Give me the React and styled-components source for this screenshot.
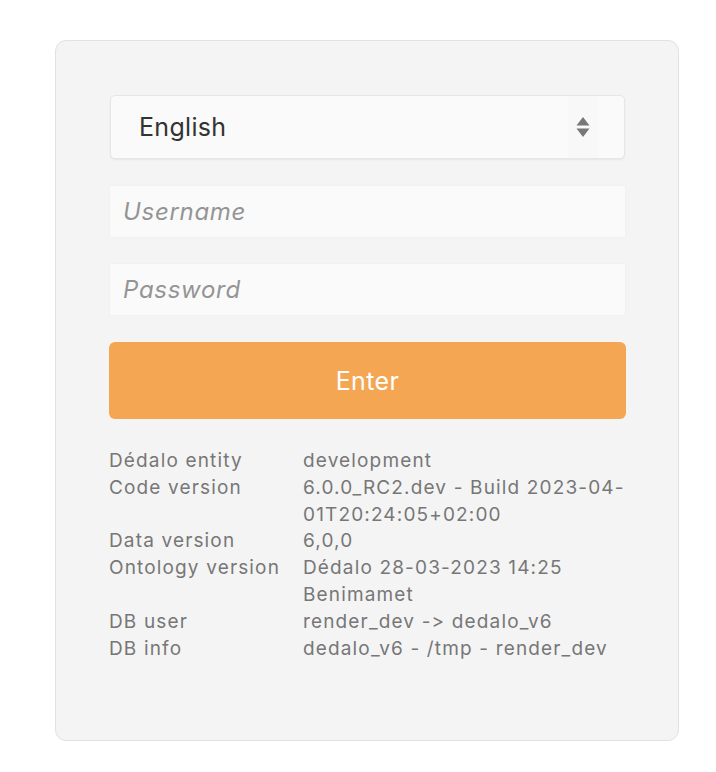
import React from 'react';
import styled, { createGlobalStyle } from 'styled-components';

const GlobalStyle = createGlobalStyle`
  body {
    margin: 0;
    background: #ffffff;
    font-family: Inter, "Noto Sans", "Liberation Sans", sans-serif;
    font-feature-settings: "calt" 0, "liga" 0;
  }
`;

const Page = styled.div`
  padding: 40px 0 0 55px;
`;

const Card = styled.div`
  box-sizing: border-box;
  width: 624px;
  height: 701px;
  background: #f4f4f4;
  border: 1.5px solid #e1e1e1;
  border-radius: 11px;
  padding: 54px 52px 0 53px;
  display: flex;
  flex-direction: column;
`;

const SelectBox = styled.div`
  box-sizing: border-box;
  height: 64px;
  margin: 0 1px;
  display: flex;
  align-items: center;
  justify-content: space-between;
  padding: 0 26px 0 28px;
  background: #fafafa;
  border: 1px solid #e6e6e6;
  border-radius: 5px;
  box-shadow: 0 1px 2px rgba(0, 0, 0, 0.06);
  font-size: 25px;
  letter-spacing: 0.3px;
  color: #333333;
`;

const Arrows = styled.span`
  display: flex;
  align-items: center;
  justify-content: center;
  width: 30px;
  height: 62px;
  background: #f8f8f8;
`;

const Input = styled.input`
  box-sizing: border-box;
  width: 100%;
  height: 53px;
  margin-top: ${p => p.$gap}px;
  padding: 0 13px;
  background: #fafafa;
  border: 1px solid #f1f1f1;
  border-radius: 0;
  outline: none;
  font-family: inherit;
  font-size: 24px;
  letter-spacing: 0.7px;
  color: #333;
  &::placeholder {
    color: #949494;
    font-style: italic;
  }
`;

const Button = styled.button`
  height: 77px;
  margin-top: 26px;
  background: #f5a652;
  border: none;
  border-radius: 6px;
  color: #ffffff;
  font-family: inherit;
  font-size: 25px;
  letter-spacing: 0.4px;
  cursor: pointer;
`;

const InfoGrid = styled.div`
  margin-top: 29px;
  display: grid;
  grid-template-columns: 194px 1fr;
  font-size: 19px;
  letter-spacing: 1.15px;
  line-height: 26.8px;
  color: #777777;
`;

const Label = styled.div`
  white-space: nowrap;
`;

const Line = styled.div`
  white-space: nowrap;
`;

const info = [
  ['Dédalo entity', ['development']],
  ['Code version', ['6.0.0_RC2.dev - Build 2023-04-', '01T20:24:05+02:00']],
  ['Data version', ['6,0,0']],
  ['Ontology version', ['Dédalo 28-03-2023 14:25', 'Benimamet']],
  ['DB user', ['render_dev -> dedalo_v6']],
  ['DB info', ['dedalo_v6 - /tmp - render_dev']],
];

const SortArrows = () => (
  <svg width="14" height="22" viewBox="0 0 14 22">
    <path d="M7 1 L13.5 9.5 H0.5 Z" fill="#777" />
    <path d="M7 21 L13.5 12.5 H0.5 Z" fill="#777" />
  </svg>
);

export default function App() {
  return (
    <Page>
      <GlobalStyle />
      <Card>
        <SelectBox>
          <span>English</span>
          <Arrows><SortArrows /></Arrows>
        </SelectBox>
        <Input $gap={26} placeholder="Username" />
        <Input $gap={25} type="password" placeholder="Password" />
        <Button>Enter</Button>
        <InfoGrid>
          {info.map(([label, lines]) => (
            <React.Fragment key={label}>
              <Label>{label}</Label>
              <div>
                {lines.map((l, i) => (
                  <Line key={i}>{l}</Line>
                ))}
              </div>
            </React.Fragment>
          ))}
        </InfoGrid>
      </Card>
    </Page>
  );
}
